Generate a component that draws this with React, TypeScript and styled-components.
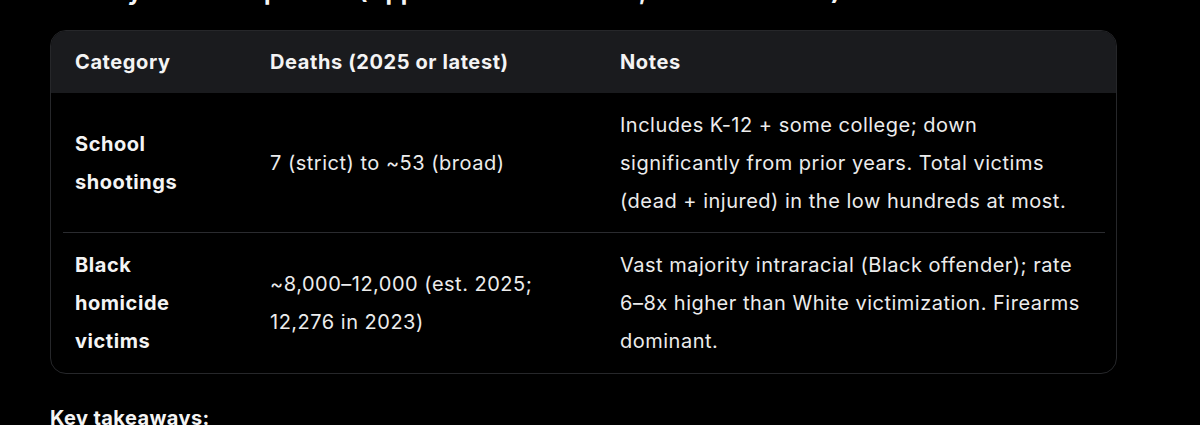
import styled, { createGlobalStyle } from "styled-components";

const GlobalStyle = createGlobalStyle`
  html, body {
    margin: 0;
    padding: 0;
    background: #000;
  }
  body {
    font-family: Inter, "Noto Sans", "Liberation Sans", sans-serif;
    color: #f2f2f2;
  }
`;

interface Row {
  category: string;
  deaths: string;
  notes: string;
}

const rows: Row[] = [
  {
    category: "School shootings",
    deaths: "7 (strict) to ~53 (broad)",
    notes:
      "Includes K-12 + some college; down significantly from prior years. Total victims (dead + injured) in the low hundreds at most.",
  },
  {
    category: "Black homicide victims",
    deaths: "~8,000–12,000 (est. 2025; 12,276 in 2023)",
    notes:
      "Vast majority intraracial (Black offender); rate 6–8x higher than White victimization. Firearms dominant.",
  },
];

function App(): JSX.Element {
  return (
    <>
      <GlobalStyle />
      <Page>
        <Heading>Side-by-Side Comparison (Approximate U.S. 2025, Latest Full Data)</Heading>
        <TableWrap>
          <Table>
            <colgroup>
              <col style={{ width: 195 }} />
              <col style={{ width: 350 }} />
              <col />
            </colgroup>
            <thead>
              <tr>
                <HeadCell>Category</HeadCell>
                <HeadCell>Deaths (2025 or latest)</HeadCell>
                <HeadCell>Notes</HeadCell>
              </tr>
            </thead>
            <tbody>
              {rows.map((row, i) => (
                <BodyRow key={row.category} $divider={i < rows.length - 1}>
                  <Cell $bold>{row.category}</Cell>
                  <Cell>{row.deaths}</Cell>
                  <Cell>{row.notes}</Cell>
                </BodyRow>
              ))}
            </tbody>
          </Table>
        </TableWrap>
        <Takeaways>Key takeaways:</Takeaways>
      </Page>
    </>
  );
}

export default App;

const Page = styled.div`
  padding: 0 84px 0 50px;
  width: 1067px;
`;

const Heading = styled.h3`
  margin: -22px 0 0;
  font-size: 24px;
  line-height: 28px;
  font-weight: 700;
  color: #f5f5f5;
  white-space: nowrap;
`;

const TableWrap = styled.div`
  margin-top: 24px;
  border: 1px solid #26272a;
  border-radius: 16px;
  overflow: hidden;
`;

const Table = styled.table`
  width: 100%;
  border-collapse: collapse;
  table-layout: fixed;

  thead tr {
    background: #1a1b1e;
  }
`;

const HeadCell = styled.th`
  text-align: left;
  padding: 12px 25px 12px 24px;
  font-size: 20px;
  line-height: 38px;
  font-weight: 700;
  letter-spacing: 0.6px;
  color: #f4f4f4;
`;

/* divider line is inset 12px from the table edges */
const BodyRow = styled.tr<{ $divider: boolean }>`
  td {
    background: ${({ $divider }) =>
      $divider ? "linear-gradient(#2a2b2f, #2a2b2f) no-repeat" : "none"};
    background-size: 100% 1px;
    background-position: left bottom;
  }

  td:first-child {
    background-size: calc(100% - 12px) 1px;
    background-position: right bottom;
  }

  td:last-child {
    background-size: calc(100% - 11px) 1px;
    background-position: left bottom;
  }
`;

const Cell = styled.td<{ $bold?: boolean }>`
  padding: 13px 25px 13px 24px;
  font-size: 20px;
  line-height: 38px;
  font-weight: ${({ $bold }) => ($bold ? 700 : 400)};
  letter-spacing: ${({ $bold }) => ($bold ? "0.55px" : "0.5px")};
  color: ${({ $bold }) => ($bold ? "#f4f4f4" : "#ececec")};
  vertical-align: middle;
`;

const Takeaways = styled.p`
  margin: 29px 0 0;
  font-size: 20px;
  line-height: 30px;
  font-weight: 700;
  letter-spacing: 0.4px;
  color: #f4f4f4;
`;
